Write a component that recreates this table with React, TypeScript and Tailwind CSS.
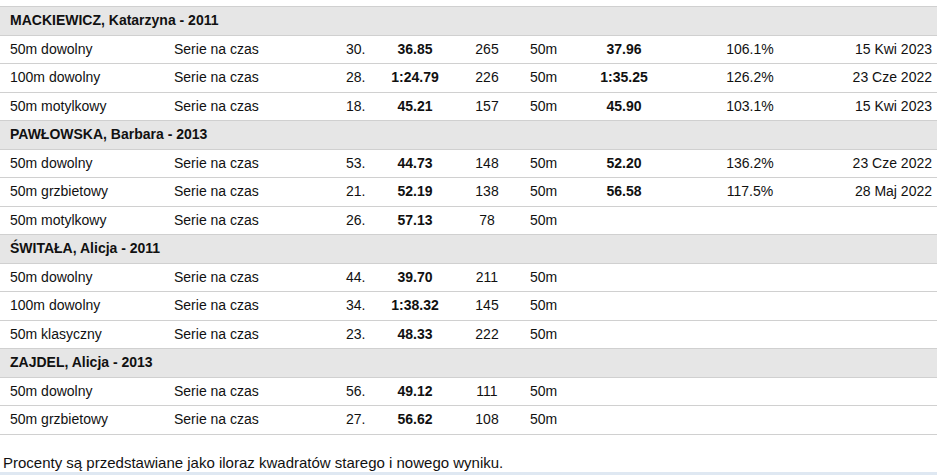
import React from "react";

type Row = {
  event: string;
  round: string;
  place: string;
  time: string;
  points: string;
  pool: string;
  best?: string;
  pct?: string;
  date?: string;
};

type Group = { name: string; rows: Row[] };

const groups: Group[] = [
  {
    name: "MACKIEWICZ, Katarzyna - 2011",
    rows: [
      { event: "50m dowolny", round: "Serie na czas", place: "30.", time: "36.85", points: "265", pool: "50m", best: "37.96", pct: "106.1%", date: "15 Kwi 2023" },
      { event: "100m dowolny", round: "Serie na czas", place: "28.", time: "1:24.79", points: "226", pool: "50m", best: "1:35.25", pct: "126.2%", date: "23 Cze 2022" },
      { event: "50m motylkowy", round: "Serie na czas", place: "18.", time: "45.21", points: "157", pool: "50m", best: "45.90", pct: "103.1%", date: "15 Kwi 2023" },
    ],
  },
  {
    name: "PAWŁOWSKA, Barbara - 2013",
    rows: [
      { event: "50m dowolny", round: "Serie na czas", place: "53.", time: "44.73", points: "148", pool: "50m", best: "52.20", pct: "136.2%", date: "23 Cze 2022" },
      { event: "50m grzbietowy", round: "Serie na czas", place: "21.", time: "52.19", points: "138", pool: "50m", best: "56.58", pct: "117.5%", date: "28 Maj 2022" },
      { event: "50m motylkowy", round: "Serie na czas", place: "26.", time: "57.13", points: "78", pool: "50m" },
    ],
  },
  {
    name: "ŚWITAŁA, Alicja - 2011",
    rows: [
      { event: "50m dowolny", round: "Serie na czas", place: "44.", time: "39.70", points: "211", pool: "50m" },
      { event: "100m dowolny", round: "Serie na czas", place: "34.", time: "1:38.32", points: "145", pool: "50m" },
      { event: "50m klasyczny", round: "Serie na czas", place: "23.", time: "48.33", points: "222", pool: "50m" },
    ],
  },
  {
    name: "ZAJDEL, Alicja - 2013",
    rows: [
      { event: "50m dowolny", round: "Serie na czas", place: "56.", time: "49.12", points: "111", pool: "50m" },
      { event: "50m grzbietowy", round: "Serie na czas", place: "27.", time: "56.62", points: "108", pool: "50m" },
    ],
  },
];

const rowCls =
  "grid grid-cols-[164px_172px_44px_70px_74px_56px_88px_164px_1fr] items-center h-[28.5px] border-t border-[#d0d0d0]";

const App = () => {
  return (
    <div className="w-[937px] h-[475px] bg-white text-[14px] text-[#111] overflow-hidden flex flex-col" style={{ fontFamily: '"Liberation Sans", Arial, sans-serif' }}>
      {/* Results table */}
      <div className="mt-[6px] border-b border-[#d0d0d0]">
        {groups.map((g) => (
          <div key={g.name}>
            <div className="h-[28.5px] border-t border-[#d0d0d0] bg-[#e6e6e6] flex items-center pl-[10px] font-bold">
              {g.name}
            </div>
            {g.rows.map((r, i) => (
              <div key={i} className={rowCls}>
                <span className="pl-[10px]">{r.event}</span>
                <span className="pl-[10px]">{r.round}</span>
                <span className="pl-[10px]">{r.place}</span>
                <span className="text-center font-bold">{r.time}</span>
                <span className="text-center">{r.points}</span>
                <span className="pl-[6px]">{r.pool}</span>
                <span className="text-center font-bold">{r.best}</span>
                <span className="text-center">{r.pct}</span>
                <span className="text-right pr-[5px]">{r.date}</span>
              </div>
            ))}
          </div>
        ))}
      </div>

      {/* Footer note */}
      <p className="mt-[19px] pl-[3px] text-[15px] leading-[17px]">
        Procenty są przedstawiane jako iloraz kwadratów starego i nowego wyniku.
      </p>
      <div className="mt-auto h-[3px] bg-[#dfe8f2]"></div>
    </div>
  );
};

export default App;
